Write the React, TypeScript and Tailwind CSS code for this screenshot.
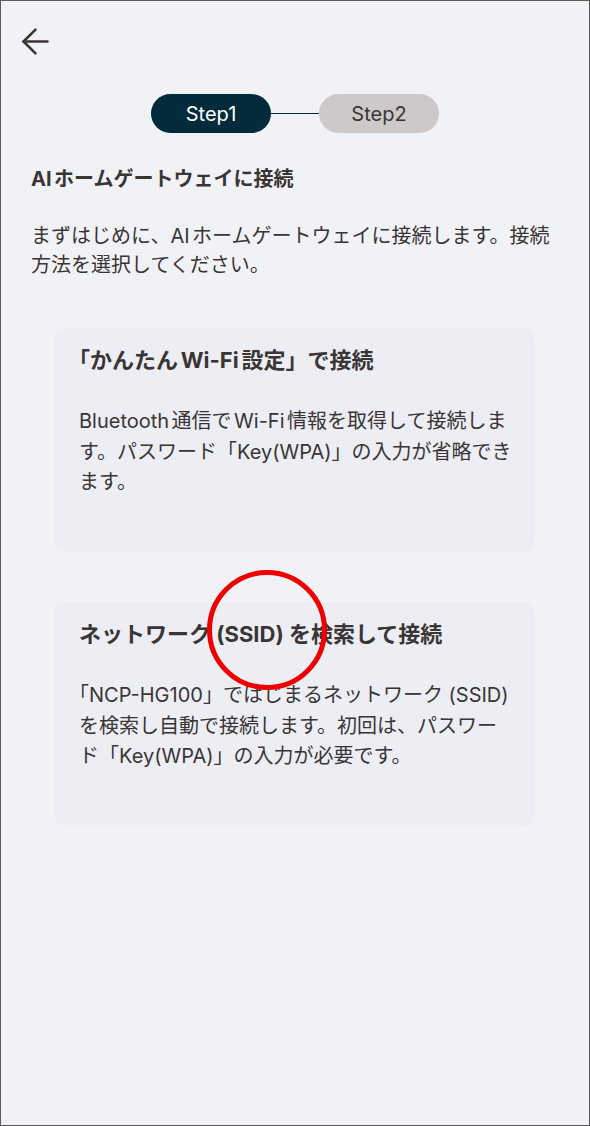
import { ArrowLeft } from "lucide-react"

const font = { fontFamily: 'Inter, "Noto Sans CJK JP", sans-serif' }

function OptionCard({ title, body }: { title: string; body: string }) {
  return (
    <div className="h-[224px] rounded-[12px] bg-[#eceef3] pl-[25px] pr-[20px] pt-[17px]">
      <h3 className="text-[22px] leading-[30px] font-bold text-[#3a3535]">{title}</h3>
      <p className="mt-[31px] text-[20px] leading-[30.5px] text-[#3a3535]">{body}</p>
    </div>
  )
}

export default function App() {
  return (
    <div
      style={font}
      className="relative h-[1126px] w-[590px] border border-[#5a5a5a] bg-[#f1f2f6] [text-spacing-trim:trim-start] [text-autospace:normal]"
    >
      <div className="pl-[14px] pt-[20px]">
        <ArrowLeft className="h-[41px] w-[41px] text-[#3a3535]" strokeWidth={1.5} />
      </div>

      <div className="mt-[32px] flex items-center justify-center">
        <div className="flex h-[39px] w-[120px] items-center justify-center rounded-full bg-[#032b3c] text-[20px] text-white">
          Step1
        </div>
        <div className="h-[1.5px] w-[48px] bg-[#032b3c]" />
        <div className="flex h-[39px] w-[120px] items-center justify-center rounded-full bg-[#cdc9c9] text-[20px] text-[#3a3535]">
          Step2
        </div>
      </div>

      <div className="px-[30px]">
        <h2 className="mt-[31px] text-[20px] leading-[30px] font-bold text-[#3a3535]">AIホームゲートウェイに接続</h2>
        <p className="mt-[28px] text-[20px] leading-[29px] text-[#3a3535]">
          まずはじめに、AIホームゲートウェイに接続します。接続方法を選択してください。
        </p>
      </div>

      <div className="mt-[48px] flex flex-col gap-[50px] pl-[53px] pr-[54px]">
        <OptionCard
          title="「かんたんWi-Fi設定」で接続"
          body="Bluetooth通信でWi-Fi情報を取得して接続します。パスワード「Key(WPA)」の入力が省略できます。"
        />
        <OptionCard
          title="ネットワーク (SSID) を検索して接続"
          body="「NCP-HG100」ではじまるネットワーク (SSID) を検索し自動で接続します。初回は、パスワード「Key(WPA)」の入力が必要です。"
        />
      </div>

      <div className="pointer-events-none absolute left-[206px] top-[569px] h-[120px] w-[120px] rounded-full border-[5px] border-[#ee0000]" />
    </div>
  )
}
